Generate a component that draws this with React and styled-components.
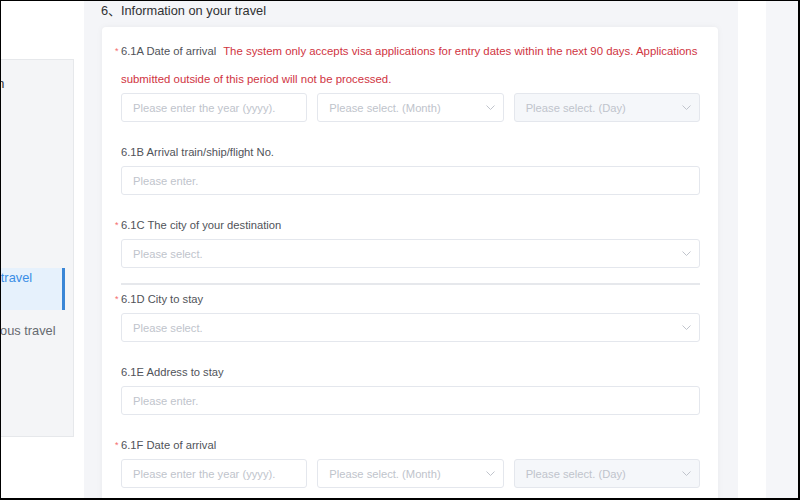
import React from "react";
import styled, { createGlobalStyle, css } from "styled-components";

const GlobalStyle = createGlobalStyle`
  html, body {
    margin: 0;
    padding: 0;
  }
  body {
    font-family: "Liberation Sans", Arial, "Noto Sans CJK SC", sans-serif;
  }
`;

const navItems = [
  { lines: ["Personal information", "(basic)"] },
  { lines: ["Passport", "info"] },
  { lines: ["Contact", "details"] },
  { lines: ["Work"] },
  { lines: ["Information on your travel", "(arrival)"], active: true },
  { lines: ["Information on previous travel", "(history)"], muted: true },
];

export default function App() {
  return (
    <Frame>
      <GlobalStyle />
      <SideColumn>
        <Panel>
          {navItems.map((item, i) => (
            <NavItem key={i} $active={item.active} $muted={item.muted}>
              {item.lines.map((l, j) => (
                <div key={j}>{l}</div>
              ))}
            </NavItem>
          ))}
        </Panel>
      </SideColumn>

      <Main>
        <Title>6、Information on your travel</Title>
        <Card>
          <FormItem>
            <Label>
              <Star>*</Star>6.1A Date of arrival
              <Warn>
                The system only accepts visa applications for entry dates within the next 90 days.
                Applications submitted outside of this period will not be processed.
              </Warn>
            </Label>
            <DateRow>
              <Input placeholder="Please enter the year (yyyy)." />
              <Select placeholder="Please select. (Month)" />
              <Select placeholder="Please select. (Day)" disabled />
            </DateRow>
          </FormItem>

          <FormItem>
            <Label>6.1B Arrival train/ship/flight No.</Label>
            <Input placeholder="Please enter." />
          </FormItem>

          <FormItem $divided>
            <Label>
              <Star>*</Star>6.1C The city of your destination
            </Label>
            <Select placeholder="Please select." />
          </FormItem>

          <FormItem>
            <Label>
              <Star>*</Star>6.1D City to stay
            </Label>
            <Select placeholder="Please select." />
          </FormItem>

          <FormItem>
            <Label>6.1E Address to stay</Label>
            <Input placeholder="Please enter." />
          </FormItem>

          <FormItem>
            <Label>
              <Star>*</Star>6.1F Date of arrival
            </Label>
            <DateRow>
              <Input placeholder="Please enter the year (yyyy)." />
              <Select placeholder="Please select. (Month)" />
              <Select placeholder="Please select. (Day)" disabled />
            </DateRow>
          </FormItem>
        </Card>
      </Main>

      <Gutter />
      <RightPane />
    </Frame>
  );
}

function Select({ placeholder, disabled }) {
  return (
    <SelectBox $disabled={disabled}>
      <Placeholder>{placeholder}</Placeholder>
      <svg width="9" height="5" viewBox="0 0 9 5" fill="none">
        <polyline points="0.5,0.5 4.5,4.5 8.5,0.5" stroke="#c0c4cc" strokeWidth="1" />
      </svg>
    </SelectBox>
  );
}

const Frame = styled.div`
  width: 800px;
  height: 500px;
  box-sizing: border-box;
  border: 1px solid #000;
  border-right-width: 2px;
  border-bottom-width: 2px;
  display: flex;
  overflow: hidden;
  background: #fff;
`;

const SideColumn = styled.div`
  width: 83px;
  flex: none;
  background: #fff;
`;

const Panel = styled.div`
  margin: 58px 0 0 -135px;
  width: 208px;
  height: 378px;
  box-sizing: border-box;
  border: 1px solid #e6e8eb;
  background: #f4f5f7;
  padding-top: 14px;
  display: flex;
  flex-direction: column;
  gap: 11px;
`;

const NavItem = styled.div`
  padding: 1px 0 5px 20px;
  margin-right: 8px;
  line-height: 18px;
  font-size: 12.8px;
  white-space: nowrap;
  color: ${(p) => (p.$active ? "#3a8ee6" : p.$muted ? "#666a70" : "#303133")};
  background: ${(p) => (p.$active ? "#e6f1fc" : "transparent")};
  border-right: 3px solid ${(p) => (p.$active ? "#3a86d6" : "transparent")};
`;

const Main = styled.div`
  width: 654px;
  flex: none;
  box-sizing: border-box;
  background: #f4f5f8;
  padding: 0 20px 0 17px;
`;

const Title = styled.div`
  font-size: 12.8px;
  line-height: 20px;
  color: #303133;
  margin-bottom: 6px;
`;

const Card = styled.div`
  margin-left: 1px;
  background: #fff;
  border-radius: 4px;
  box-shadow: 0 0 6px rgba(0, 0, 0, 0.05);
  padding: 10px 18px 40px 19px;
`;

const FormItem = styled.div`
  margin-bottom: 16px;
  ${(p) =>
    p.$divided &&
    css`
      margin-bottom: 0;
      padding-bottom: 15px;
      border-bottom: 2px solid #e6e8ec;
    `}
`;

const Label = styled.div`
  font-size: 11.2px;
  line-height: 28px;
  color: #505359;
`;

const Star = styled.span`
  display: inline-block;
  width: 6px;
  margin-left: -6px;
  color: #f56c6c;
  font-size: 9px;
  vertical-align: 1px;
`;

const Warn = styled.span`
  color: #d0343f;
  margin-left: 7px;
  font-size: 11.4px;
`;

const fieldBase = css`
  display: block;
  width: 100%;
  box-sizing: border-box;
  height: 29px;
  border: 1px solid #e4e7ed;
  border-radius: 3px;
  padding: 0 11px;
  font-size: 11.2px;
  font-family: inherit;
  color: #606266;
  background: #fff;
`;

const Input = styled.input`
  ${fieldBase}
  outline: none;
  &::placeholder {
    color: #c0c4cc;
  }
`;

const SelectBox = styled.div`
  ${fieldBase}
  padding-right: 8px;
  display: flex;
  align-items: center;
  justify-content: space-between;
  background: ${(p) => (p.$disabled ? "#f5f7fa" : "#fff")};
`;

const Placeholder = styled.span`
  color: #c0c4cc;
`;

const DateRow = styled.div`
  display: grid;
  grid-template-columns: repeat(3, 1fr);
  gap: 10px;
`;

const Gutter = styled.div`
  width: 28px;
  flex: none;
  background: #fff;
`;

const RightPane = styled.div`
  flex: 1;
  background: #f5f6f9;
`;
